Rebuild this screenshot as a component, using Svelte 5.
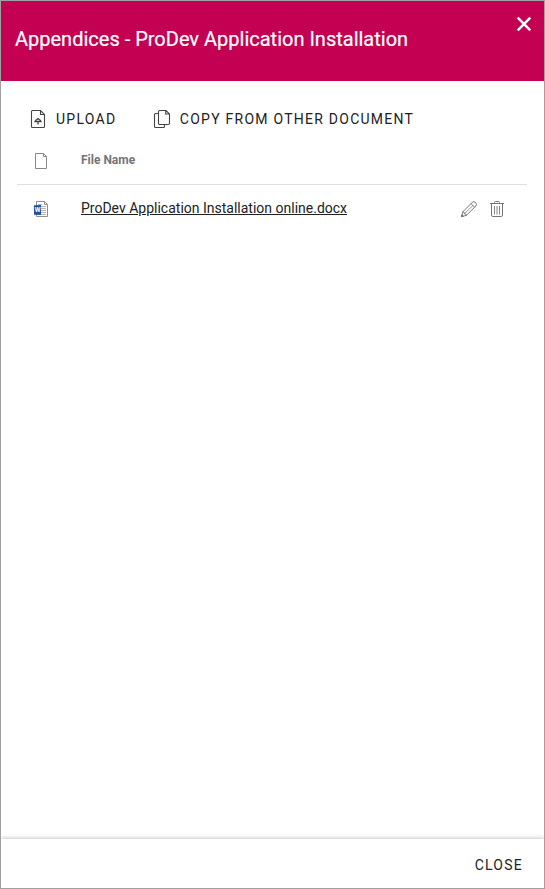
<script>
  const files = [{ name: 'ProDev Application Installation online.docx' }];
</script>

<section class="dialog">
  <header>
    <h1>Appendices - ProDev Application Installation</h1>
    <button class="dismiss" aria-label="Close dialog">
      <svg width="16" height="16" viewBox="0 0 16 16"><path d="M1.7 1.7 14.3 14.3M14.3 1.7 1.7 14.3" fill="none" stroke="#fff" stroke-width="2.5" /></svg>
    </button>
  </header>

  <main>
    <div class="toolbar">
      <button class="upload">
        <svg width="16" height="20" viewBox="0 0 16 20" fill="none" stroke="#444" stroke-width="1.1">
          <path d="M2.5 1.5H10.5L14.5 5.5V17.5Q14.5 18.5 13.5 18.5H2.5Q1.5 18.5 1.5 17.5V2.5Q1.5 1.5 2.5 1.5ZM10.5 1.5V5.5H14.5" />
          <path d="M8 15.5V12.5M5 12.5Q5.3 11.2 8 9.5 10.7 11.2 11 12.5Z" stroke-width="1.3" />
        </svg>
        <span>UPLOAD</span>
      </button>
      <button class="copy">
        <svg width="18" height="20" viewBox="0 0 18 20" fill="none" stroke="#444" stroke-width="1.1">
          <path d="M6.5 1.5H13L16.5 5V14Q16.5 15.5 15 15.5H6.5Q5.5 15.5 5.5 14.5V2.5Q5.5 1.5 6.5 1.5ZM12.7 1.5V5H16.5" />
          <path d="M5.5 4.5H2.5Q1.5 4.5 1.5 5.5V17.5Q1.5 18.5 2.5 18.5H10.5Q11.5 18.5 11.5 17.5V15.5" />
        </svg>
        <span>COPY FROM OTHER DOCUMENT</span>
      </button>
    </div>

    <div class="row head">
      <div class="type">
        <svg width="14" height="16" viewBox="0 0 14 16" fill="none" stroke="#888"><path d="M1.5.5H9.5L12.5 3.5V15.5H1.5ZM9.5 .5V3.5H12.5" /></svg>
      </div>
      <div class="name">File Name</div>
    </div>

    {#each files as file}
      <div class="row item">
        <div class="type">
          <svg width="16" height="16" viewBox="0 0 16 16" fill="none">
            <path d="M2.5.5H10.5L13.5 3.5V15.5H2.5ZM10.5 .5V3.5H13.5" fill="#fff" stroke="#8f8f8f" />
            <path d="M4 3.5H8M7 5.5H12M7 7.5H12M7 9.5H12M7 11.5H12M4 13.5H12" stroke="#b5b5b5" />
            <path d="M0 4.3 7 4V14L0 13.7Z" fill="#2151a0" />
            <text x="3.5" y="11.3" fill="#fff" font-size="6.5" font-weight="700" text-anchor="middle">W</text>
          </svg>
        </div>
        <a class="name" href="#file">{file.name}</a>
        <button aria-label="Edit">
          <svg width="18" height="18" viewBox="0 0 18 18" fill="none" stroke="#777">
            <path d="M1.7 16.5 2.8 11.8 12.4 2.2Q13.9 1 15.6 2.6T16 5.8L6.4 15.4ZM2.8 11.8 4.1 12.2 4.6 13.6 6 14.1 6.4 15.4M11 3.6 14.6 7.2" />
            <path d="M13 5.4 4.6 13.6" stroke-width=".8" />
            <path d="M1.3 16.8 1.8 14.8 3.3 16.3Z" fill="#777" />
          </svg>
        </button>
        <button class="delete" aria-label="Delete">
          <svg width="14" height="18" viewBox="0 0 14 18" fill="none" stroke="#777">
            <path d="M0 3.5H14M4.5 3.3V2.5Q4.5 1.5 5.5 1.5H8.5Q9.5 1.5 9.5 2.5V3.3M1.5 3.5V15Q1.5 16.5 3 16.5H11Q12.5 16.5 12.5 15V3.5" />
            <path d="M4.5 6V14.5M7 6V14.5M9.5 6V14.5" stroke-width=".9" />
          </svg>
        </button>
      </div>
    {/each}
  </main>

  <footer><button>CLOSE</button></footer>
</section>

<style>
  :global(body) { margin: 0; }
  .dialog {
    box-sizing: border-box;
    width: 545px;
    height: 889px;
    border: 1px solid #a0a0a0;
    display: flex;
    flex-direction: column;
    background: #fff;
    font-family: Roboto, "Liberation Sans", sans-serif;
    color: #212121;
  }
  svg { display: block; flex: none; }
  button {
    border: 0;
    padding: 0;
    background: none;
    font: inherit;
    color: inherit;
    display: flex;
    align-items: center;
  }
  header {
    height: 80px;
    flex: none;
    box-sizing: border-box;
    padding: 0 12px 0 14px;
    background: #c40052;
    color: #fff;
    display: flex;
    justify-content: space-between;
    align-items: flex-start;
  }
  h1 {
    margin: 26px 0 0;
    font-size: 20px;
    line-height: 24px;
    font-weight: 400;
    -webkit-text-stroke: .2px #fff;
    white-space: nowrap;
  }
  .dismiss { margin-top: 15px; }
  main { flex: 1; padding: 27px 17px 0 16px; }
  .toolbar { display: flex; height: 22px; padding-left: 13px; }
  .toolbar button, footer button {
    font-size: 14px;
    letter-spacing: 1.25px;
    white-space: nowrap;
  }
  .upload { gap: 10px; }
  .copy { gap: 9px; margin-left: 36.5px; }
  .row { display: flex; align-items: center; padding-right: 23px; }
  .head {
    height: 55px;
    box-sizing: border-box;
    padding-top: 7px;
    border-bottom: 1px solid #e0e0e0;
    font-size: 12px;
    font-weight: 700;
    color: #757575;
  }
  .head .name { padding-bottom: 2px; }
  .head .type { padding-top: 1px; }
  .item { height: 48px; font-size: 14px; }
  .type { width: 64px; flex: none; display: flex; padding-left: 17px; box-sizing: border-box; }
  .item .name { flex: 1; padding-bottom: 2px; color: #212121; text-decoration: underline; }
  .delete { margin-left: 12px; }
  footer {
    height: 49px;
    flex: none;
    display: flex;
    justify-content: flex-end;
    align-items: center;
    padding: 3px 21px 0 0;
    box-shadow: 0 -1px 4px rgba(0, 0, 0, .22);
    clip-path: inset(-5px 0 0 0);
    box-sizing: border-box;
  }
</style>
